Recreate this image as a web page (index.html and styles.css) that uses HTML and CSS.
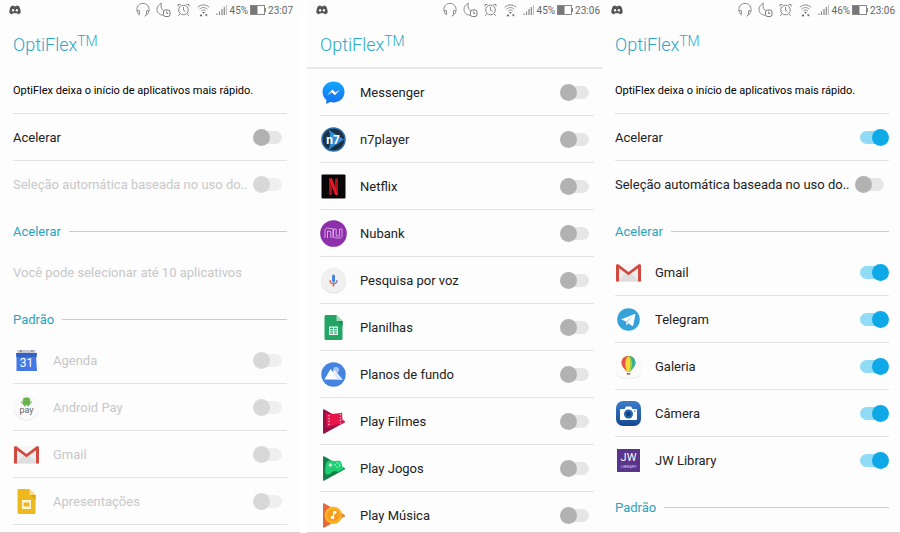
FILE: index.html
```html
<!DOCTYPE html>
<html lang="pt-BR">
<head>
  <meta charset="UTF-8">
  <title>OptiFlex</title>
  <meta name="viewport" content="width=device-width,initial-scale=1.0">
  <link rel="stylesheet" href="styles.css">
</head>
<body>
  <!-- shared icons -->
  <svg class="defs" width="0" height="0" aria-hidden="true">
    <symbol id="i-discord" viewBox="0 0 12 10">
      <path d="M2.2 1 4.4.4l.5.8h2.2l.5-.8 2.2.6C11.200 3 11.800 5.500 11.600 8c-.8.700-1.700 1.100-2.700 1.400l-.8-1.200H3.900l-.8 1.200C2.100 9.100 1.200 8.700.4 8 .2 5.500.8 3 2.200 1z" fill="#555"/>
      <ellipse cx="4.100" cy="5.300" rx="1.100" ry="1.200" fill="#fff"/><ellipse cx="7.900" cy="5.300" rx="1.100" ry="1.200" fill="#fff"/>
    </symbol>
    <symbol id="i-headset" viewBox="0 0 14 16">
      <path d="M3.500 13C1.500 11.500.9 9.500.9 7.500.9 4 3.500 1.400 7 1.400S13.100 4 13.100 7.500c0 2-.6 4-2.600 5.500" fill="none" stroke="#888"/>
      <path d="M1.400 8.500l2 .2v4M12.600 8.500l-2 .2v4l-2 1.600" fill="none" stroke="#888"/>
    </symbol>
    <symbol id="i-moon" viewBox="0 0 15 16">
      <path d="M5.500 1.300C2.800 2.300 1 4.600 1 7.300c0 3.300 2.700 5.900 6 5.900M5.500 1.300c-1.200 3.500.2 6.800 3 8" fill="none" stroke="#888"/>
      <rect x="7.500" y="8" width="6.500" height="6.500" rx="2" fill="#fff" stroke="#777"/>
      <path d="M10.700 9.500v2h1.500" fill="none" stroke="#777"/>
    </symbol>
    <symbol id="i-alarm" viewBox="0 0 13 14">
      <circle cx="6.500" cy="7" r="4.800" fill="none" stroke="#888"/>
      <path d="M6.500 4v3.300l2 1M1 3.500V1.500h2.500M12 3.500V1.500H9.500M2.800 11l-1.500 1.800M10.200 11l1.500 1.800" fill="none" stroke="#888"/>
    </symbol>
    <symbol id="i-wifi" viewBox="0 0 13 14">
      <path d="M.8 4.300c3.300-3.200 8.100-3.200 11.400 0M2.600 6.200c2.300-2.200 5.500-2.200 7.800 0M4.300 8c1.300-1.200 3.100-1.200 4.400 0" fill="none" stroke="#888"/>
      <path d="M6.500 10.700 5.200 9h2.600zM4 11l1.400 2.200H2.600zM9.300 13.500 7.900 11.500h2.800z" fill="#555"/>
    </symbol>
    <symbol id="i-signal" viewBox="0 0 11 12">
      <path d="M1 11V9.500M3.500 11V7.500M6 11V5M8.300 11V3" stroke="#888" stroke-width="1.200"/>
      <path d="M10.400 11V1" stroke="#bbb"/>
    </symbol>
    <symbol id="i-battery" viewBox="0 0 16 10">
      <rect x=".5" y=".5" width="14" height="9" fill="#fff" stroke="#888"/>
      <rect x="1" y="1" width="6.500" height="8" fill="#777"/>
      <path d="M15.500 3v4" stroke="#888"/>
    </symbol>
    <symbol id="i-gmail" viewBox="0 0 27 27">
      <path d="M2 5.500h23v17H2z" fill="#ececec"/>
      <path d="M2 22.500 13.500 12 25 22.500z" fill="#dedede"/>
      <path d="M3.500 5.500h20l-10 8z" fill="#f6f6f6"/>
      <path d="M1 6.500c0-.8.600-1.300 1.400-1.300h.9L13.500 13 23.700 5.200h.9c.8 0 1.400.5 1.400 1.300v16h-3V9.300l-9.500 7L4 9.300v13.200H1z" fill="#d04a40"/>
    </symbol>
  </svg>

  <main class="screens">
    <section class="screen screen-off">
      <div class="status">
        <svg class="discord"><use href="#i-discord"/></svg>
        <svg class="headset"><use href="#i-headset"/></svg>
        <svg class="moon"><use href="#i-moon"/></svg>
        <svg class="alarm"><use href="#i-alarm"/></svg>
        <svg class="wifi"><use href="#i-wifi"/></svg>
        <svg class="signal"><use href="#i-signal"/></svg>
        <span class="percent">45%</span>
        <svg class="battery"><use href="#i-battery"/></svg>
        <span class="time">23:07</span>
      </div>
      <h1>OptiFlex<sup>TM</sup></h1>
      <p class="row intro">OptiFlex deixa o início de aplicativos mais rápido.</p>
      <label class="row"><span class="name">Acelerar</span><input type="checkbox" class="switch"></label>
      <label class="row plain disabled"><span class="name">Seleção automática baseada no uso do..</span><input type="checkbox" class="switch" disabled></label>
      <h2>Acelerar</h2>
      <p class="row plain disabled">Você pode selecionar até 10 aplicativos</p>
      <h2>Padrão</h2>
      <label class="row disabled">
        <svg class="icon" viewBox="0 0 27 27">
          <path d="M4.500 3h18v4h-18z" fill="#c3c7cf"/>
          <path d="M8 3v2M19 3v2" stroke="#8d95a3" stroke-width="2"/>
          <path d="M3 6h21l-.8 6 .8 12H3.500V12z" fill="#4478e4"/>
          <path d="M3 6h21l-.8 4H3.700z" fill="#3360c4"/>
          <text x="13.500" y="19.500" font-size="12" text-anchor="middle" fill="#fff">31</text>
        </svg>
        <span class="name">Agenda</span><input type="checkbox" class="switch" disabled>
      </label>
      <label class="row disabled">
        <svg class="icon" viewBox="0 0 27 27">
          <circle cx="13.500" cy="14" r="12.500" fill="#d6d6d6"/>
          <circle cx="13.500" cy="13.500" r="12.500" fill="#fafafa"/>
          <path d="M10 6.500a3.500 2.800 0 0 1 7 0zM10 7h7v3.500h-1.500V12h-1v-1.500h-2V12h-1v-1.500H10zM8.800 7v2.500M18.200 7v2.500" fill="#67b346" stroke="#67b346" stroke-width=".8"/>
          <path d="M11 4.500 10.300 3.500M16 4.500l.7-1" stroke="#67b346" stroke-width=".6"/>
          <text x="13.500" y="18.500" font-size="9" text-anchor="middle" fill="#666">pay</text>
        </svg>
        <span class="name">Android Pay</span><input type="checkbox" class="switch" disabled>
      </label>
      <label class="row disabled">
        <svg class="icon"><use href="#i-gmail"/></svg>
        <span class="name">Gmail</span><input type="checkbox" class="switch" disabled>
      </label>
      <label class="row disabled">
        <svg class="icon" viewBox="0 0 27 27">
          <path d="M6 1h10.500L22.500 7v17.500c0 .8-.7 1.500-1.500 1.500H6c-.8 0-1.500-.7-1.500-1.500v-22C4.500 1.700 5.200 1 6 1z" fill="#edb91f"/>
          <path d="M16.500 1v6h6z" fill="#f8dc86"/><path d="M22.500 7v5l-5-5z" fill="#d69f18"/>
          <path d="M9 12h9v9H9zM10.500 14.500v4h6v-4z" fill="#fff6d8" fill-rule="evenodd"/>
        </svg>
        <span class="name">Apresentações</span><input type="checkbox" class="switch" disabled>
      </label>
    </section>

    <section class="screen screen-list">
      <div class="status">
        <svg class="discord"><use href="#i-discord"/></svg>
        <svg class="headset"><use href="#i-headset"/></svg>
        <svg class="moon"><use href="#i-moon"/></svg>
        <svg class="alarm"><use href="#i-alarm"/></svg>
        <svg class="wifi"><use href="#i-wifi"/></svg>
        <svg class="signal"><use href="#i-signal"/></svg>
        <span class="percent">45%</span>
        <svg class="battery"><use href="#i-battery"/></svg>
        <span class="time">23:06</span>
      </div>
      <h1>OptiFlex<sup>TM</sup></h1>
      <div class="divider"></div>
      <label class="row">
        <svg class="icon" viewBox="0 0 27 27">
          <linearGradient id="g-msg" x2="0" y2="1"><stop stop-color="#12a8fb"/><stop offset="1" stop-color="#1470f5"/></linearGradient>
          <path d="M13.500 2.500C7.300 2.500 2.500 7 2.500 13c0 3.300 1.500 6 3.800 8v4l3.800-2c1.100.3 2.200.4 3.400.4 6.200 0 11-4.500 11-10.400s-4.800-10.500-11-10.500z" fill="url(#g-msg)"/>
          <path d="M7 16.200l5.500-5.700 3 2.900 4.700-2.900-5.400 5.700-3-2.900z" fill="#fff"/>
        </svg>
        <span class="name">Messenger</span><input type="checkbox" class="switch">
      </label>
      <label class="row">
        <svg class="icon" viewBox="0 0 27 27">
          <circle cx="13.500" cy="13.500" r="11.500" fill="#1c2f42" stroke="#2f6ea6" stroke-width="1.500"/>
          <path d="M9 4 24 13.500 9 23.500z" fill="#2c8ad4"/>
          <path d="M5 11l5-5v15l-5-4z" fill="#22364a"/>
          <text x="13" y="18" font-size="12" font-weight="700" text-anchor="middle" fill="#fff">n7</text>
        </svg>
        <span class="name">n7player</span><input type="checkbox" class="switch">
      </label>
      <label class="row">
        <svg class="icon" viewBox="0 0 27 27">
          <rect x="1.500" y="1.500" width="24" height="24" rx="1" fill="#080607"/>
          <path d="M9 5.500h3v16.200L9 22zM15 5.500h3V22l-3-.3z" fill="#b30d18"/>
          <path d="M9 5.500h3l6 16.500-3-.3z" fill="#eb1925"/>
        </svg>
        <span class="name">Netflix</span><input type="checkbox" class="switch">
      </label>
      <label class="row">
        <svg class="icon" viewBox="0 0 27 27">
          <circle cx="13.500" cy="13.500" r="13.300" fill="#8c2fa9"/>
          <path d="M5 18v-7.500c0-1.500 1-2.500 2.500-2.500S11 9 13 9v9M7.500 18v-7l3.300.5V18M13.500 9v6.500c0 1.600 1 2.500 2.500 2.500h3.500c1.500 0 2.500-1 2.500-2.500V9h-2.500v7h-3.300V9z" fill="none" stroke="#dfb7ea" stroke-width=".9"/>
        </svg>
        <span class="name">Nubank</span><input type="checkbox" class="switch">
      </label>
      <label class="row">
        <svg class="icon" viewBox="0 0 27 27">
          <circle cx="13.500" cy="14" r="12.500" fill="#d2d2d2"/><circle cx="13.500" cy="13.500" r="12.500" fill="#f0f0f0"/>
          <rect x="12" y="7.500" width="3" height="8" rx="1.500" fill="#4285e8"/>
          <path d="M10 13c0 2.200 1.500 3.700 3.500 3.700" fill="none" stroke="#e25545" stroke-width="1.200"/>
          <path d="M17 13c0 2.200-1.500 3.700-3.500 3.700" fill="none" stroke="#8a6ab0" stroke-width="1.200"/>
          <path d="M13.500 16.500v3" stroke="#e25545" stroke-width="1.500"/>
        </svg>
        <span class="name">Pesquisa por voz</span><input type="checkbox" class="switch">
      </label>
      <label class="row">
        <svg class="icon" viewBox="0 0 27 27">
          <path d="M6 1h10.500l6 6v17.500c0 .8-.7 1.500-1.500 1.500H6c-.8 0-1.500-.7-1.500-1.500v-22C4.500 1.700 5.200 1 6 1z" fill="#23a566"/>
          <path d="M16.500 1v6h6z" fill="#a4dcc0"/><path d="M22.500 7v5l-5-5z" fill="#1c8a54"/>
          <path d="M9 12.500h9V21H9zM10.200 13.700v1.500H13v-1.500zM14.200 13.700v1.500h2.600v-1.500zM10.200 16.200v1.300H13v-1.300zM14.200 16.200v1.300h2.600v-1.300zM10.200 18.500v1.300H13v-1.300zM14.200 18.500v1.300h2.600v-1.300z" fill="#eefaf3" fill-rule="evenodd"/>
        </svg>
        <span class="name">Planilhas</span><input type="checkbox" class="switch">
      </label>
      <label class="row">
        <svg class="icon" viewBox="0 0 27 27">
          <circle cx="13.500" cy="13.500" r="12.200" fill="#4583e0"/>
          <circle cx="16" cy="9" r="3" fill="#a9c8f5"/>
          <path d="M4.500 18.500 10.500 8l2.500 3 2-1.500 7.500 9z" fill="#fff"/>
          <path d="M14 12.500l2-1.500 6.500 7.500h-6z" fill="#dbe8fc"/>
        </svg>
        <span class="name">Planos de fundo</span><input type="checkbox" class="switch">
      </label>
      <label class="row">
        <svg class="icon" viewBox="0 0 27 27">
          <path d="M3 2c0-.8.800-1 1.500-.6L24.500 13c.7.400.7 1 0 1.400L4.500 25.600C3.800 26 3 25.700 3 25z" fill="#9c1048"/>
          <path d="M6 5.500c5 .8 10 .5 16-1l.5 7.500 2.500 1.700L22 16c-5 .5-10 1.500-15 3.500z" fill="#e8174b"/>
          <path d="M9 7v11M20.500 6v9.500" stroke="#ffc0d0" stroke-width="1.300" stroke-dasharray="1.300 1.600"/>
        </svg>
        <span class="name">Play Filmes</span><input type="checkbox" class="switch">
      </label>
      <label class="row">
        <svg class="icon" viewBox="0 0 27 27">
          <path d="M3 2c0-.8.800-1 1.500-.6L24.500 13c.7.400.7 1 0 1.400L4.500 25.600C3.800 26 3 25.700 3 25z" fill="#16804a"/>
          <path d="M6.500 7.500C8 5 11 5.500 14 6c3 .3 5.500-1 7 1 1 1.500 1 3.500 1.800 5.200l1.200 1.500L18 17c-3-2-5.500-1-8 1.800-1.500 1.500-3.800 1.400-4.500-.800C4.800 15 5.500 10 6.500 7.500z" fill="#20cf74"/>
          <path d="M10.500 8v4M8.500 10h4" stroke="#d7ffe8" stroke-width="1.200"/>
          <circle cx="17.500" cy="10" r="2.300" fill="none" stroke="#a7f3c9" stroke-width="1.100" stroke-dasharray="1.600 1.300"/>
        </svg>
        <span class="name">Play Jogos</span><input type="checkbox" class="switch">
      </label>
      <label class="row">
        <svg class="icon" viewBox="0 0 27 27">
          <path d="M3 2c0-.8.800-1 1.500-.6L24.500 13c.7.400.7 1 0 1.400L4.500 25.600C3.800 26 3 25.700 3 25z" fill="#e8673a"/>
          <path d="M20 10l4.500 3c.7.400.7 1 0 1.400L18 18z" fill="#e08c2a"/>
          <circle cx="13.300" cy="13.300" r="8.800" fill="#fbb325"/><circle cx="13.300" cy="13.300" r="6" fill="#f79a1e"/>
          <path d="M13.500 15.500V9.500h2.500v1.700h-1.300" fill="#fff" stroke="#fff"/>
          <circle cx="12.500" cy="15.500" r="1.800" fill="#fff"/>
        </svg>
        <span class="name">Play Música</span><input type="checkbox" class="switch">
      </label>
    </section>

    <section class="screen screen-on">
      <div class="status">
        <svg class="discord"><use href="#i-discord"/></svg>
        <svg class="headset"><use href="#i-headset"/></svg>
        <svg class="moon"><use href="#i-moon"/></svg>
        <svg class="alarm"><use href="#i-alarm"/></svg>
        <svg class="wifi"><use href="#i-wifi"/></svg>
        <svg class="signal"><use href="#i-signal"/></svg>
        <span class="percent">46%</span>
        <svg class="battery"><use href="#i-battery"/></svg>
        <span class="time">23:06</span>
      </div>
      <h1>OptiFlex<sup>TM</sup></h1>
      <p class="row intro">OptiFlex deixa o início de aplicativos mais rápido.</p>
      <label class="row"><span class="name">Acelerar</span><input type="checkbox" class="switch" checked></label>
      <label class="row plain"><span class="name">Seleção automática baseada no uso do..</span><input type="checkbox" class="switch"></label>
      <h2>Acelerar</h2>
      <label class="row">
        <svg class="icon"><use href="#i-gmail"/></svg>
        <span class="name">Gmail</span><input type="checkbox" class="switch" checked>
      </label>
      <label class="row">
        <svg class="icon" viewBox="0 0 27 27">
          <circle cx="13.500" cy="13.500" r="11.300" fill="#35a3da"/>
          <path d="M6 13.500 19.500 8c.6-.2 1 .1.900.8l-2.200 10.400c-.2.700-.7.900-1.300.5l-3.400-2.500-2 2-.8-4z" fill="#fff"/>
          <path d="M10.700 15.200 18 10l-5.500 6.300-.9 2.600z" fill="#b9d9ec"/>
        </svg>
        <span class="name">Telegram</span><input type="checkbox" class="switch" checked>
      </label>
      <label class="row">
        <svg class="icon" viewBox="0 0 27 27">
          <rect x="1.500" y="2" width="24" height="23.500" rx="6" fill="#e9e9e9"/>
          <rect x="1.500" y="1" width="24" height="23.500" rx="6" fill="#fbfbfb"/>
          <path d="M13.500 3C9.500 3 6.500 5.700 6.500 9.500c0 4 3.500 6.500 5.500 9.500h3c2-3 5.500-5.500 5.500-9.500C20.500 5.700 17.500 3 13.500 3z" fill="#f8d93a"/>
          <path d="M13.500 3c-4 0-7 2.700-7 6.500 0 4 3.500 6.500 5.500 9.500C10 13 9 7 13.500 3z" fill="#ea5151"/>
          <path d="M13.500 3c4 0 7 2.700 7 6.500 0 4-3.500 6.500-5.500 9.500 2-6 3-12-1.500-16z" fill="#3cae93"/>
          <path d="M13.500 3c2.500 4 2 11 .5 16h1c2.500-6 2.500-12-1.500-16z" fill="#9bd03f"/>
          <path d="M11.800 20h3.400v1.700h-3.400z" fill="#a26a45"/>
        </svg>
        <span class="name">Galeria</span><input type="checkbox" class="switch" checked>
      </label>
      <label class="row">
        <svg class="icon" viewBox="0 0 27 27">
          <linearGradient id="g-cam" x2="0" y2="1"><stop stop-color="#3d7bc9"/><stop offset="1" stop-color="#154a92"/></linearGradient>
          <rect x="1" y="1" width="25" height="25" rx="7" fill="url(#g-cam)"/>
          <path d="M6 9h3.500L11 6.500h5L17.500 9H21c.6 0 1 .4 1 1v9c0 .6-.4 1-1 1H6c-.6 0-1-.4-1-1v-9c0-.6.400-1 1-1z" fill="#fff"/>
          <circle cx="13.500" cy="14" r="4.500" fill="#2563ab"/><circle cx="13.500" cy="14" r="2.200" fill="#123b78"/>
          <path d="M19 11h1.500" stroke="#2563ab"/>
        </svg>
        <span class="name">Câmera</span><input type="checkbox" class="switch" checked>
      </label>
      <label class="row plain">
        <svg class="icon" viewBox="0 0 27 27">
          <path d="M2 2h23v23H2z" fill="#59358c"/>
          <text x="13.500" y="14" font-size="11" text-anchor="middle" fill="#fff">JW</text>
          <text x="13.500" y="21" font-size="4" text-anchor="middle" fill="#d9cdea">LIBRARY</text>
        </svg>
        <span class="name">JW Library</span><input type="checkbox" class="switch" checked>
      </label>
      <h2>Padrão</h2>
    </section>
  </main>
</body>
</html>
```
FILE: styles.css
```css
* {box-sizing:border-box;}
body {margin:0; font-family:Roboto,"Liberation Sans",sans-serif; font-size:13px; color:#222; background:#fff;}
h1,h2,p {margin:0; font-weight:400;}
.defs {display:block;}

.screens {display:grid; grid-template-columns:307fr 295fr 298fr; height:100vh;}
.screen {min-width:0; overflow:hidden; padding-left:13px; background:#fdfdfd; border-bottom:1px solid #d2d2d2;}
.screen-off {padding-right:13px; margin-right:7px;}
.screen-list {padding-right:8px;}
.screen-on {padding-right:11px;}

/* status bar */
.status {display:flex; align-items:center; height:20px; margin:0 -6px 0 -4px; color:#666; font-size:10px;}
.status svg {flex:none;}
.discord {width:12px; height:10px; margin-right:auto;}
.headset {width:14px; height:16px; margin-right:6px;}
.moon {width:15px; height:16px; margin-right:6px;}
.alarm {width:13px; height:14px; margin-right:7px;}
.wifi {width:13px; height:14px; margin-right:6px;}
.signal {width:11px; height:12px; margin-right:3px;}
.battery {width:16px; height:10px; margin:0 2px;}

h1 {height:47px; padding-top:13px; font-size:18px; font-weight:300; line-height:24px; color:#2ba9c8;}
h1 sup {font-size:14px; line-height:1; vertical-align:5px;}
.divider {height:2px; margin:0 -8px 0 -13px; background:#e8e8e8;}

h2 {display:flex; align-items:center; gap:8px; height:42px; padding-top:7px; font-size:13px; color:#2ba3bf;}
h2::after {content:""; flex:1; height:1px; background:#a5d8e4;}

.row {display:flex; align-items:center; height:47px; border-bottom:1px solid #e2e2e2;}
.row.plain {height:46px; border-bottom:0;}
.row.disabled {color:#c8c8c8;}
.row.intro {font-size:11px; color:#000;}
.name {flex:1; white-space:nowrap;}
.icon {flex:none; width:27px; height:27px; margin-right:13px;}

/* switch */
.switch {appearance:none; display:grid; align-items:center; flex:none; width:29px; height:17px; margin:0 5px 0 0;}
.switch::before,.switch::after {content:""; grid-area:1/1;}
.switch::before {width:26px; height:13px; margin-left:3px; border-radius:7px; background:#e6e6e6;}
.switch::after {width:17px; height:17px; border-radius:50%; background:#b2b2b2;}
.switch:checked {margin-right:0;}
.switch:checked::before {margin-left:0; background:#90dbf5;}
.switch:checked::after {justify-self:end; background:#0fa9e8;}
.switch:disabled::before {background:#efefef;}
.switch:disabled::after {background:#d8d8d8;}
```
